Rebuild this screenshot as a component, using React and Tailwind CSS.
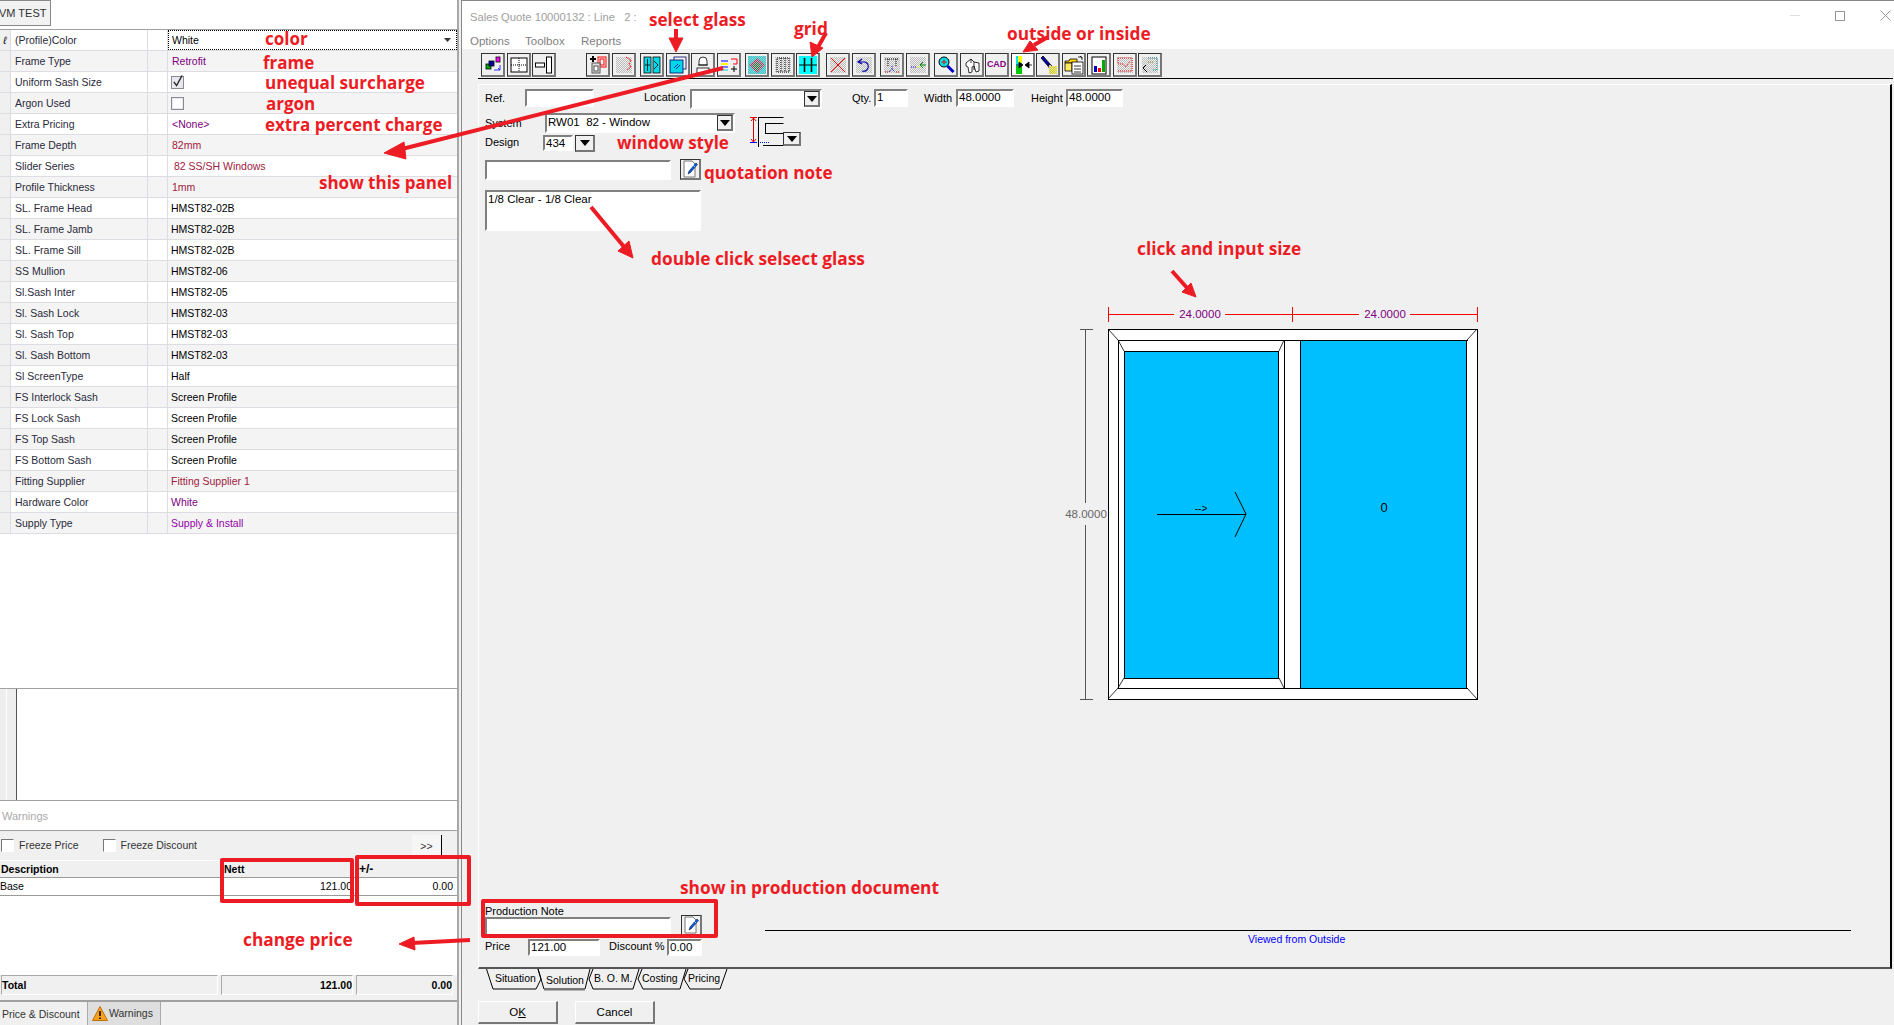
// App.jsx
const rows = [
  { label: '(Profile)Color', combo: true, value: 'White' },
  { label: 'Frame Type', value: 'Retrofit', color: 'text-[#800080] pl-[4px]' },
  { label: 'Uniform Sash Size', check: true },
  { label: 'Argon Used', check: false },
  { label: 'Extra Pricing', value: '<None>', color: 'text-[#800080] pl-[4px]' },
  { label: 'Frame Depth', value: '82mm', color: 'text-[#a0203c] pl-[4px]' },
  { label: 'Slider Series', value: '82 SS/SH Windows', color: 'text-[#a0203c] pl-[6px]' },
  { label: 'Profile Thickness', value: '1mm', color: 'text-[#a0203c] pl-[4px]' },
  { label: 'SL. Frame Head', value: 'HMST82-02B' },
  { label: 'SL. Frame Jamb', value: 'HMST82-02B' },
  { label: 'SL. Frame Sill', value: 'HMST82-02B' },
  { label: 'SS Mullion', value: 'HMST82-06' },
  { label: 'Sl.Sash Inter', value: 'HMST82-05' },
  { label: 'Sl. Sash Lock', value: 'HMST82-03' },
  { label: 'Sl. Sash Top', value: 'HMST82-03' },
  { label: 'Sl. Sash Bottom', value: 'HMST82-03' },
  { label: 'Sl ScreenType', value: 'Half' },
  { label: 'FS Interlock Sash', value: 'Screen Profile' },
  { label: 'FS Lock Sash', value: 'Screen Profile' },
  { label: 'FS Top Sash', value: 'Screen Profile' },
  { label: 'FS Bottom Sash', value: 'Screen Profile' },
  { label: 'Fitting Supplier', value: 'Fitting Supplier 1', color: 'text-[#a0203c] pl-[3px]' },
  { label: 'Hardware Color', value: 'White', color: 'text-[#800080] pl-[3px]' },
  { label: 'Supply Type', value: 'Supply & Install', color: 'text-[#9400a8] pl-[3px]' },
];

const D = 'url(#dither)';

// toolbar buttons, left margin = gap to the previous one
const tools = [
  { ml: 'ml-0', icon: <><rect x="3" y="9" width="5" height="5" fill="#0a0" stroke="#000" strokeWidth=".8" /><rect x="6" y="6" width="5" height="5" fill="#00a" stroke="#000" strokeWidth=".8" /><rect x="13" y="2" width="4" height="5" fill="#f0f" stroke="#000" strokeWidth=".8" /><path d="M11 15h6v-5M15 13l2 2" fill="none" stroke="#00f" strokeWidth=".8" /></> },
  { ml: 'ml-[2px]', icon: <><rect x="2" y="3" width="16" height="14" fill="#fff" stroke="#000" /><path d="M2 10h16M10 3v14" stroke="#000" strokeDasharray="1 1" /></> },
  { ml: 'ml-[1px]', icon: <><rect x="1.500" y="8" width="9" height="4" fill="#fff" stroke="#000" /><rect x="12.500" y="2" width="5" height="16" fill="#fff" stroke="#000" /></> },
  { ml: 'ml-[30px]', icon: <><rect x="10" y="2" width="8" height="10" fill="none" stroke="#f00" /><rect x="12" y="4" width="4" height="6" fill="none" stroke="#f00" /><rect x="4" y="8" width="8" height="10" fill="#ddd" stroke="#555" /><rect x="6" y="11" width="4" height="5" fill="#fff" stroke="#555" /><path d="M2 4h6M5 1v6" stroke="#000" strokeWidth="2" /></> },
  { ml: 'ml-[2px]', icon: <><rect x="2" y="2" width="16" height="16" fill={D} /><path d="M12 2l5 3-2 4 2 3-4 3" fill="none" stroke="#f00" strokeDasharray="2 1" /></> },
  { ml: 'ml-[4px]', icon: <><rect x="2" y="2" width="7" height="16" fill="#00d8e8" stroke="#000" strokeWidth=".8" /><rect x="11" y="2" width="7" height="16" fill="#00d8e8" stroke="#000" strokeWidth=".8" /><path d="M5.500 4v12M3 10h5M12 6l4 4-4 4" fill="none" stroke="#000" strokeWidth=".8" /></> },
  { ml: 'ml-[2px]', icon: <><rect x="6" y="2" width="12" height="12" fill="none" stroke="#006" strokeWidth=".8" /><rect x="2" y="5" width="13" height="13" fill="#00d8e8" stroke="#006" strokeWidth=".8" /><path d="M6 13l4-4M8 14l4-4" stroke="#00a" strokeWidth=".8" /></> },
  { ml: 'ml-[1px]', icon: <><path d="M6 10V6a4 4 0 0 1 8 0v4z" fill="#fff" stroke="#000" strokeWidth=".8" /><path d="M5 10h10" stroke="#000" strokeWidth=".8" /><rect x="4" y="13" width="12" height="5" fill="#fff" stroke="#000" strokeWidth=".8" /></> },
  { ml: 'ml-[2px]', icon: <><path d="M2 6h7" stroke="#00f" /><path d="M2 9h7" stroke="#ff0" strokeWidth="2" /><path d="M2 12h7" stroke="#00f" /><path d="M2 15h7" stroke="#0cc" /><path d="M12 4h6v5h-4" fill="none" stroke="#f00" /><path d="M12 14h6M15 11v6" stroke="#000" /></> },
  { ml: 'ml-[4px]', icon: <><rect x="1" y="1" width="18" height="18" fill="#00e0e8" /><path d="M10 3l8 7-8 8-8-8z" fill="#b03060" /><path d="M10 7l5 3-5 6-5-6z" fill="#208040" /><rect x="1" y="1" width="18" height="18" fill={D} /></> },
  { ml: 'ml-[2px]', icon: <><rect x="2" y="2" width="16" height="16" fill={D} /><rect x="4" y="3" width="12" height="14" fill="none" stroke="#000" strokeDasharray="1 1" /><path d="M8 3v14M12 3v14" stroke="#000" strokeDasharray="1 1" /></> },
  { ml: 'ml-[1px]', icon: <><rect x="1" y="1" width="18" height="18" fill="#00ffff" /><path d="M6.500 3v14M13.500 3v14" stroke="#000" strokeWidth="1.600" /><path d="M1 10h18" stroke="#000" /></> },
  { ml: 'ml-[6px]', icon: <><rect x="2" y="2" width="16" height="16" fill={D} /><path d="M3 3l14 14M17 3L3 17" stroke="#f00" /></> },
  { ml: 'ml-[2px]', icon: <><rect x="2" y="2" width="16" height="16" fill={D} /><path d="M8 4L4 7l4 2M4 7h7a5 5 0 0 1 3 6 5 5 0 0 1-6 3" fill="none" stroke="#00a" strokeWidth="1.100" /></> },
  { ml: 'ml-[4px]', icon: <><rect x="2" y="2" width="16" height="16" fill={D} /><path d="M3 4h14M6 4v8M14 4v8" stroke="#000" strokeDasharray="1 1" /><path d="M10 11v3M7 17l3-3 3 3" fill="none" stroke="#00a" strokeDasharray="1 1" /><path d="M3 17h3M14 17h3" stroke="#c00" strokeDasharray="1 1" /></> },
  { ml: 'ml-[2px]', icon: <><rect x="2" y="2" width="16" height="16" fill={D} /><path d="M3 12h6" stroke="#00f" strokeDasharray="1 1" /><path d="M9 12h4" stroke="#ff0" strokeDasharray="1 1" /><path d="M12 10h6M12 10l3-3M12 10l3 3" stroke="#080" fill="none" /></> },
  { ml: 'ml-[4px]', icon: <><circle cx="8" cy="7" r="5" fill="#00e0e8" stroke="#000" /><path d="M8 4.500v5M5.500 7h5" stroke="#f00" /><path d="M11.500 11l6 6" stroke="#00c" strokeWidth="3" /></> },
  { ml: 'ml-[2px]', icon: <><path d="M4 8l5-4 3 3 5 1v8l-3 1-2-6-2 1v5l-3 1-1-6-2-1z" fill="#fff" stroke="#000" strokeWidth=".8" /><path d="M12 7v8M9 4v4" stroke="#000" strokeWidth=".8" /></> },
  { ml: 'ml-[1px]', text: 'CAD' },
  { ml: 'ml-[2px]', light: true, icon: <><path d="M3 1h6v18H3z" fill="#00e8e8" /><path d="M5 1h4v7H5z" fill="#ff0" /><path d="M3 11h6v8H3z" fill="#0c0" /><path d="M3 10h3M6 7v6l4-3zM19 10h-3M12 10l4-3v6z" fill="#000" stroke="#000" strokeWidth=".8" /></> },
  { ml: 'ml-[1px]', icon: <><path d="M3 3l2-2 7 8-2 2z" fill="#00a" stroke="#000" strokeWidth=".8" /><path d="M10 11l2-2 2 2-2 3z" fill="#ccc" stroke="#000" strokeWidth=".8" /><rect x="11" y="11" width="8" height="8" fill="#ffff00" /><rect x="11" y="11" width="8" height="8" fill={D} /></> },
  { ml: 'ml-[2px]', icon: <><path d="M1 6h4l1-2h7v4H1z" fill="#ffd800" stroke="#000" strokeWidth=".8" /><path d="M1 8h7v8H1z" fill="#ffe860" stroke="#000" strokeWidth=".8" /><rect x="8" y="7" width="11" height="12" fill="#fff" stroke="#000" strokeWidth=".8" /><path d="M10 11h7M10 14h7M10 17h7" stroke="#000" strokeWidth=".8" /><path d="M14 2h4v3M16 1l2 2" stroke="#000" fill="none" strokeWidth=".8" /></> },
  { ml: 'ml-[1px]', icon: <><rect x="3" y="2" width="14" height="17" fill="#fff" stroke="#000" /><rect x="5" y="11" width="3" height="6" fill="#00c" /><rect x="9" y="13" width="3" height="4" fill="#f00" /><rect x="13" y="5" width="3" height="12" fill="#0a0" /></> },
  { ml: 'ml-[2px]', icon: <><rect x="2" y="2" width="16" height="16" fill={D} /><path d="M3 3h14v13M3 3v6h5l3 3 4-6M3 16h14" fill="none" stroke="#f00" strokeDasharray="1 1" /></> },
  { ml: 'ml-[1px]', icon: <><rect x="2" y="2" width="16" height="16" fill={D} /><path d="M8 3h9v12h-5" fill="none" stroke="#088" strokeDasharray="1 1" /><path d="M8 7h6" stroke="#880" strokeDasharray="1 1" /><path d="M3 13l4 4M3 13l3-3" stroke="#000" fill="none" /></> },
];

const Label = ({ className = '', children }) => (
  <span className={`text-[11px] leading-[14px] text-black ${className}`}>{children}</span>
);

const Sunken = ({ className = '', children }) => (
  <div className={`border-2 border-t-[#808080] border-l-[#808080] border-r-white border-b-white bg-white text-[11.5px] leading-[13px] pl-[1px] overflow-hidden whitespace-nowrap ${className}`}>
    {children}
  </div>
);

const Raised = ({ className = '', children }) => (
  <div className={`border border-t-[#333] border-l-[#333] border-r-2 border-b-2 border-r-[#777] border-b-[#777] bg-[#f0f0f0] flex items-center justify-center shrink-0 ${className}`}>
    {children}
  </div>
);

const Caret = () => (
  <svg width="10" height="6" viewBox="0 0 10 6"><path d="M0 0h10L5 6z" fill="#000" /></svg>
);

const NoteIcon = () => (
  <svg width="18" height="18" viewBox="0 0 18 18">
    <path d="M3 1h8l3 3v13H3z" fill="#fff" stroke="#777" />
    <path d="M7 14l1-3 7-8 1.500 1.500-7 8z" fill="#0060e0" stroke="#003" strokeWidth=".5" />
    <path d="M12 5l2 2" stroke="#90d8ff" />
  </svg>
);

// size is a class, the notes on the left panel are a touch smaller
const Note = ({ className = '', size = 'text-[17.3px]', children }) => (
  <div className={`absolute font-['Open_Sans',sans-serif] font-bold leading-[20px] text-[#ed1c24] whitespace-nowrap ${size} ${className}`}>
    {children}
  </div>
);

const RedBox = ({ className = '' }) => (
  <div className={`absolute border-[4px] border-[#ed1c24] rounded-[2px] ${className}`} />
);

function PropertyGrid() {
  return (
    <div className="flex-1 border-t border-[#a0a0a0]">
      {rows.map((row, i) => (
        <div
          key={row.label}
          className={`flex h-[21px] border-b border-[#dcdce2] text-[10.5px] leading-[20px] ${i % 2 ? 'bg-[#f4f4f4]' : 'bg-white'}`}
        >
          <div className="w-[11px] shrink-0 bg-[#f0f0f0] border-r border-[#dcdce2] text-center italic">
            {i === 0 ? 'ℓ' : ''}
          </div>
          <div className="w-[137px] shrink-0 pl-[4px] text-[#2a2a3a] border-r border-[#dcdce2]">{row.label}</div>
          <div className="w-[20px] shrink-0 border-r border-[#dcdce2]" />
          {row.combo ? (
            <div className="flex-1 flex items-center justify-between border border-dotted border-black pl-[3px] pr-[5px] bg-white h-[20px]">
              <span>{row.value}</span>
              <svg width="7" height="4" viewBox="0 0 7 4"><path d="M0 0h7L3.500 4z" fill="#333" /></svg>
            </div>
          ) : row.check !== undefined ? (
            <div className="flex-1 flex items-center pl-[3px]">
              <div className="w-[13px] h-[13px] border border-[#8a8a95] bg-[#e8e8ee] flex items-center justify-center">
                {row.check && (
                  <svg width="12" height="14" viewBox="0 0 12 14" className="-mt-[3px]"><path d="M2 8l3 4 6-11" fill="none" stroke="#222" strokeWidth="1.500" /></svg>
                )}
                {row.check === false && <div className="w-[9px] h-[9px] bg-white" />}
              </div>
            </div>
          ) : (
            <div className={`flex-1 ${row.color || 'text-black pl-[3px]'}`}>{row.value}</div>
          )}
        </div>
      ))}
    </div>
  );
}

function LeftPanel() {
  return (
    <div className="w-[459px] h-[1025px] shrink-0 flex flex-col bg-white border-r-2 border-[#a8a8a8]">
      <div className="h-[29px] shrink-0">
        <div className="w-[52px] h-[26px] -ml-[1px] border border-[#888] bg-[#f2f2f2] text-[11px] leading-[24px] text-[#333] overflow-hidden whitespace-nowrap">
          <span className="-ml-[1px]">VM TEST</span>
        </div>
      </div>
      <div className="h-[659px] shrink-0 flex flex-col">
        <PropertyGrid />
      </div>
      <div className="h-[113px] shrink-0 flex border-y border-[#a0a0a0]">
        <div className="w-[7px] bg-[#eeeeee] border-r border-white" />
        <div className="w-[9px] bg-[#eeeeee] border-r border-[#555] box-content" />
      </div>
      <div className="h-[30px] shrink-0 border-b border-[#a0a0a0] pl-[2px] text-[11px] leading-[30px] text-[#aaa]">Warnings</div>
      <div className="flex-1 flex flex-col bg-white text-[10.5px]">
        <div className="h-[29px] shrink-0 bg-[#f0f0f0] flex items-center relative">
          <div className="w-[13px] h-[13px] ml-[1px] border border-t-[#777] border-l-[#777] border-r-white border-b-white bg-white" />
          <span className="ml-[5px] text-[#333]">Freeze Price</span>
          <div className="w-[13px] h-[13px] ml-[24px] border border-t-[#777] border-l-[#777] border-r-white border-b-white bg-white" />
          <span className="ml-[5px] text-[#333]">Freeze Discount</span>
          <div className="ml-auto mr-[15px] w-[30px] h-[22px] bg-[#f6f6f6] border-r border-black text-center leading-[22px] text-[#333]">&gt;&gt;</div>
        </div>
        <div className="h-[18px] shrink-0 bg-[#f0f0f0] flex font-bold leading-[17px] border-b border-[#999] border-t border-t-white">
          <div className="w-[222px] pl-[1px]">Description</div>
          <div className="w-[134px] pl-[2px]">Nett</div>
          <div className="flex-1 pl-[3px] text-[12px]">+/-</div>
        </div>
        <div className="h-[18px] shrink-0 flex leading-[16px] border-b border-[#999]">
          <div className="w-[222px]">Base</div>
          <div className="w-[130px] text-right">121.00</div>
          <div className="flex-1 text-right pr-[4px]">0.00</div>
        </div>
        <div className="flex-1" />
        <div className="h-[27px] shrink-0 bg-[#f0f0f0] flex gap-[3px] font-bold pl-[1px] pr-[4px] border-t border-white border-b border-b-[#a0a0a0]">
          <div className="w-[217px] h-[20px] border border-[#aaa] border-r-white border-b-white leading-[18px]">Total</div>
          <div className="w-[132px] h-[20px] border border-[#aaa] border-r-white border-b-white leading-[18px] text-right pr-[0px]">121.00</div>
          <div className="flex-1 h-[20px] border border-[#aaa] border-r-white border-b-white leading-[18px] text-right">0.00</div>
        </div>
        <div className="h-[24px] shrink-0 bg-[#f0f0f0] flex border-t border-[#a0a0a0] text-[#333]">
          <div className="w-[87px] pl-[2px] leading-[24px]">Price &amp; Discount</div>
          <div className="w-[74px] bg-[#dedede] border-x border-[#aaa] flex items-center gap-[1px] pl-[4px]">
            <svg width="16" height="15" viewBox="0 0 16 15">
              <path d="M8 .500L15.500 14.500H.500z" fill="#f5a020" stroke="#c07000" />
              <path d="M8 5v5M8 11.500v1.500" stroke="#000" strokeWidth="1.500" />
            </svg>
            <span>Warnings</span>
          </div>
        </div>
      </div>
    </div>
  );
}

function Toolbar() {
  return (
    <div className="h-[29px] shrink-0 pt-[4px] pl-[19px] flex items-start">
      {tools.map((t, i) => (
        <Raised key={i} className={`w-[24px] h-[24px] ${t.ml} ${t.light ? 'bg-white' : ''}`}>
          {t.text ? (
            <span className="text-[9px] font-bold text-[#800080] tracking-tight">{t.text}</span>
          ) : (
            <svg width="20" height="20" viewBox="0 0 20 20">{t.icon}</svg>
          )}
        </Raised>
      ))}
    </div>
  );
}

function Drawing() {
  return (
    <svg
      width="430"
      height="410"
      viewBox="1060 295 430 410"
      shapeRendering="crispEdges"
      className="ml-[581px] mt-[64px] shrink-0"
    >
      {/* dimensions */}
      <path d="M1108 307v15M1292.500 307v15M1477 307v15M1108 314.500h66M1225 314.500h67M1292 314.500h67M1410 314.500h67" stroke="#f00" fill="none" />
      <text x="1200" y="318" textAnchor="middle" fontSize="11.500" fill="#800080">24.0000</text>
      <text x="1385" y="318" textAnchor="middle" fontSize="11.500" fill="#800080">24.0000</text>
      <path d="M1080 329.500h13M1080 699.500h13M1085.500 329v174M1085.500 525v174" stroke="#555" fill="none" />
      <text x="1086" y="518" textAnchor="middle" fontSize="11.500" fill="#666">48.0000</text>
      {/* frame */}
      <rect x="1108.500" y="329.500" width="369" height="370" fill="#fff" stroke="#000" />
      <path d="M1108 329l10 11M1477 329l-10 11M1108 699l10-11M1477 699l-10-11M1118 340l6 11M1284 340l-5 11M1118 688l6-10M1284 688l-5-10" fill="none" stroke="#000" strokeWidth=".8" shapeRendering="auto" />
      <path d="M1118.500 340.500h349M1118.500 688.500h349M1118.500 340v349M1284.500 340v349" fill="none" stroke="#000" />
      <rect x="1124.500" y="351.500" width="154" height="327" fill="#00bfff" stroke="#000" />
      <rect x="1300.500" y="340.500" width="166" height="348" fill="#00bfff" stroke="#000" />
      <path d="M1157 514.500h89" stroke="#000" />
      <path d="M1235 492l11 22-11 23" stroke="#000" fill="none" shapeRendering="auto" />
      <text x="1201" y="512" textAnchor="middle" fontSize="10" fill="#000">--&gt;</text>
      <text x="1384" y="512" textAnchor="middle" fontSize="13" fill="#000">0</text>
    </svg>
  );
}

function Tabs() {
  const t = 'fill-black text-[10.5px]';
  return (
    <svg width="260" height="24" viewBox="478 968 260 24" className="shrink-0 block">
      <path d="M486.500 968l6.500 20h43l5-10-3-10" fill="none" stroke="#000" />
      <path d="M538 968l6 20h41l5-20" fill="none" stroke="#000" strokeWidth="1" />
      <path d="M544 988.500h41" stroke="#777" strokeWidth="2" />
      <path d="M593 968l-4 10 4 10h40l6-20" fill="none" stroke="#000" />
      <path d="M642 968l-4 10 5 10h37l6-20" fill="none" stroke="#000" />
      <path d="M688 968l-4 10 6 10h30l7-20" fill="none" stroke="#000" />
      <text x="495" y="981" className={t}>Situation</text>
      <text x="546" y="983" className={t}>Solution</text>
      <text x="594" y="981" className={t}>B. O. M.</text>
      <text x="642" y="981" className={t}>Costing</text>
      <text x="688" y="981" className={t}>Pricing</text>
    </svg>
  );
}

function QuoteWindow() {
  return (
    <div className="flex-1 h-[1025px] ml-[2px] flex flex-col bg-[#f0f0f0] border-l border-t border-[#888]">
      <div className="h-[48px] shrink-0 bg-white relative">
        <div className="pl-[8px] pt-[9px] text-[11.2px] leading-[14px] text-[#a0a0a0] whitespace-pre">Sales Quote 10000132 : Line   2 :</div>
        <div className="pl-[8px] pt-[10px] flex text-[11.5px] leading-[14px] text-[#808080]">
          <span className="w-[55px]">Options</span>
          <span className="w-[56px]">Toolbox</span>
          <span>Reports</span>
        </div>
        <div className="absolute right-[3px] top-[9px] flex items-center gap-[35px]">
          <div className="w-[10px] h-[1px] bg-[#ddd]" />
          <div className="w-[10px] h-[10px] border border-[#999]" />
          <svg width="11" height="11" viewBox="0 0 11 11"><path d="M.500.500l10 10M10.500.500l-10 10" stroke="#999" /></svg>
        </div>
      </div>
      <Toolbar />
      <div className="h-[1px] shrink-0 ml-[16px] mr-[1px] bg-black" />
      <div className="h-[5px] shrink-0" />
      <div className="h-[885px] shrink-0 ml-[16px] mr-[2px] flex flex-col border-t border-l border-white border-r-2 border-r-black border-b-2 border-b-[#555]">
        {/* top controls */}
        <div className="pl-[6px] pt-[4px] flex flex-col">
          <div className="flex items-start h-[24px]">
            <Label className="w-[40px] pt-[2px]">Ref.</Label>
            <Sunken className="w-[69px] h-[18px]" />
            <Label className="w-[46px] ml-[50px] pt-[1px]">Location</Label>
            <div className="w-[132px] h-[20px] flex justify-end border-2 border-t-[#808080] border-l-[#808080] border-r-white border-b-white bg-white">
              <Raised className="w-[16px] h-[16px]"><Caret /></Raised>
            </div>
            <Label className="w-[22px] ml-[30px] pt-[2px]">Qty.</Label>
            <Sunken className="w-[34px] h-[18px]">1</Sunken>
            <Label className="w-[32px] ml-[16px] pt-[2px]">Width</Label>
            <Sunken className="w-[58px] h-[18px]">48.0000</Sunken>
            <Label className="w-[35px] ml-[17px] pt-[2px]">Height</Label>
            <Sunken className="w-[57px] h-[18px]">48.0000</Sunken>
          </div>
          <div className="flex items-start h-[22px]">
            <Label className="w-[60px] pt-[3px]">System</Label>
            <div className="w-[190px] h-[20px] flex justify-between border-2 border-t-[#808080] border-l-[#808080] border-r-white border-b-white bg-white text-[11.5px] leading-[15px] pl-[1px] whitespace-pre">
              <span>RW01  82 - Window</span>
              <Raised className="w-[16px] h-[16px]"><Caret /></Raised>
            </div>
            <svg width="36" height="32" viewBox="0 0 36 32" className="ml-[15px] mt-[3px] shrink-0">
              <path d="M0 1.500h7M3.500 2v24" stroke="#e00000" fill="none" />
              <path d="M1 5l2.500-3L6 5M1 23l2.500 3L6 23" stroke="#e00000" fill="none" />
              <path d="M0 26.500h7M10 26.500h1M12 26.500h1M14 26.500h1M16 26.500h1M18 26.500h1" stroke="#0000ff" />
              <path d="M8.500 1v30M8.500 1.500h25M15.500 7v11M15.500 7.500h18M15.500 17.500h18M13 29.500h21" stroke="#000" fill="none" />
            </svg>
          </div>
          <div className="flex items-start h-[25px] relative">
            <Label className="w-[58px]">Design</Label>
            <Sunken className="w-[30px] h-[16px]">434</Sunken>
            <Raised className="w-[20px] h-[17px] ml-[2px]"><Caret /></Raised>
            <Raised className="absolute left-[298px] -top-[3px] w-[18px] h-[14px]"><Caret /></Raised>
          </div>
          <div className="flex items-start h-[30px]">
            <Sunken className="w-[186px] h-[20px]" />
            <Raised className="w-[21px] h-[21px] ml-[9px] -mt-[1px] border-[#333]"><NoteIcon /></Raised>
          </div>
          <Sunken className="w-[216px] h-[41px] leading-[14px]">1/8 Clear - 1/8 Clear</Sunken>
        </div>
        <Drawing />
        {/* bottom controls */}
        <div className="mt-auto pb-[11px] pl-[6px] flex items-start">
          <div className="w-[217px] shrink-0 flex flex-col">
            <Label className="leading-[13px]">Production Note</Label>
            <div className="flex items-start h-[21px] -mt-[1px]">
              <Sunken className="w-[186px] h-[19px]" />
              <Raised className="w-[21px] h-[21px] ml-[10px] -mt-[2px]"><NoteIcon /></Raised>
            </div>
            <div className="flex items-start mt-[1px]">
              <Label className="w-[43px]">Price</Label>
              <Sunken className="w-[72px] h-[17px]">121.00</Sunken>
              <Label className="w-[58px] ml-[9px]">Discount %</Label>
              <Sunken className="w-[35px] h-[17px]">0.00</Sunken>
            </div>
          </div>
          <div className="ml-[63px] mt-[26px] w-[1086px] border-t border-black">
            <div className="text-[10.500px] leading-[14px] text-[#0000ff] mt-[1px] pl-[483px]">Viewed from Outside</div>
          </div>
        </div>
      </div>
      <div className="pl-[16px]"><Tabs /></div>
      <div className="pl-[16px] mt-[8px] flex gap-[17px]">
        <div className="w-[80px] h-[23px] border border-t-white border-l-white border-r-2 border-b-2 border-r-[#777] border-b-[#777] text-center text-[11.5px] leading-[21px]">O<span className="underline">K</span></div>
        <div className="w-[80px] h-[23px] border border-t-white border-l-white border-r-2 border-b-2 border-r-[#777] border-b-[#777] text-center text-[11.5px] leading-[21px]">Cancel</div>
      </div>
    </div>
  );
}

export default function App() {
  return (
    <div className="relative w-[1894px] h-[1025px] overflow-hidden flex bg-[#f0f0f0] text-black font-['Liberation_Sans',Arial,sans-serif]">
      <svg width="0" height="0" className="absolute">
        <defs>
          <pattern id="dither" width="2" height="2" patternUnits="userSpaceOnUse">
            <rect width="1" height="1" fill="#bbb" />
            <rect x="1" y="1" width="1" height="1" fill="#bbb" />
          </pattern>
        </defs>
      </svg>
      <LeftPanel />
      <QuoteWindow />

      {/* red notes pasted on top of the screenshot */}
      <Note size="text-[17px]" className="left-[265px] top-[29px]">color</Note>
      <Note size="text-[17px]" className="left-[263px] top-[53px]">frame</Note>
      <Note size="text-[17.1px]" className="left-[265px] top-[73px]">unequal surcharge</Note>
      <Note size="text-[17px]" className="left-[266px] top-[94px]">argon</Note>
      <Note size="text-[17px]" className="left-[265px] top-[115px]">extra percent charge</Note>
      <Note size="text-[17px]" className="left-[319px] top-[173px]">show this panel</Note>
      <Note size="text-[17.1px]" className="left-[649px] top-[10px]">select glass</Note>
      <Note className="left-[794px] top-[19px]">grid</Note>
      <Note className="left-[1007px] top-[24px]">outside or inside</Note>
      <Note size="text-[17px]" className="left-[617px] top-[133px]">window style</Note>
      <Note size="text-[17.1px]" className="left-[704px] top-[163px]">quotation note</Note>
      <Note className="left-[651px] top-[249px]">double click selsect glass</Note>
      <Note className="left-[1137px] top-[239px]">click and input size</Note>
      <Note className="left-[680px] top-[878px]">show in production document</Note>
      <Note className="left-[243px] top-[930px]">change price</Note>
      <RedBox className="left-[220px] top-[858px] w-[134px] h-[45px]" />
      <RedBox className="left-[355px] top-[855px] w-[116px] h-[51px]" />
      <RedBox className="left-[481px] top-[899px] w-[237px] h-[39px]" />
      <svg width="1894" height="1025" viewBox="0 0 1894 1025" className="absolute left-0 top-0 pointer-events-none" fill="#ed1c24" stroke="#ed1c24">
        <path d="M723 68L398 150" strokeWidth="4" />
        <path d="M384 153l20-11 2 17z" />
        <path d="M676 29v12" strokeWidth="4" />
        <path d="M669 38h14l-7 14z" />
        <path d="M826 33l-8 14" strokeWidth="4" />
        <path d="M810 42l13 6-11 9z" />
        <path d="M1048 37l-14 8" strokeWidth="4" />
        <path d="M1023 52l7-11 8 9z" />
        <path d="M591 207l34 41" strokeWidth="4" />
        <path d="M633 258l-15-7 11-10z" />
        <path d="M1172 271l16 18" strokeWidth="4" />
        <path d="M1196 297l-14-5 9-9z" />
        <path d="M470 940l-58 3" strokeWidth="4" />
        <path d="M399 944l15-7 1 13z" />
      </svg>
    </div>
  );
}
